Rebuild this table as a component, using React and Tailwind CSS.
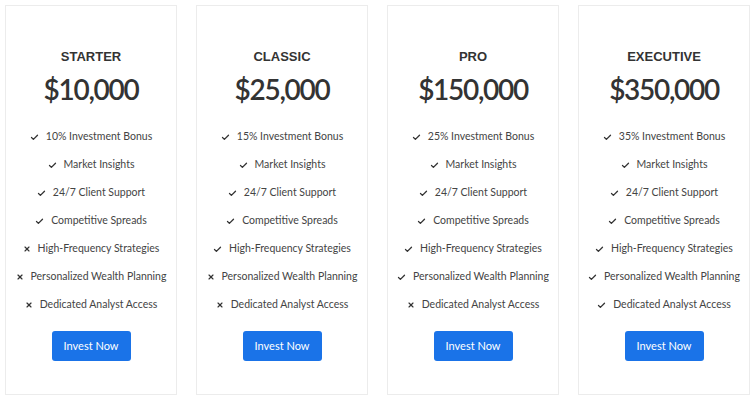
import { Check, X } from "lucide-react";

const features = [
  "Investment Bonus",
  "Market Insights",
  "24/7 Client Support",
  "Competitive Spreads",
  "High-Frequency Strategies",
  "Personalized Wealth Planning",
  "Dedicated Analyst Access",
];

const plans = [
  { name: "STARTER", price: "$10,000", bonus: "10%", included: 4 },
  { name: "CLASSIC", price: "$25,000", bonus: "15%", included: 5 },
  { name: "PRO", price: "$150,000", bonus: "25%", included: 6 },
  { name: "EXECUTIVE", price: "$350,000", bonus: "35%", included: 7 },
];

function PlanCard({ plan }) {
  return (
    <div className="flex flex-col items-center border border-[#ececec] bg-white pt-[41px]">
      <h3 className="text-[13px] font-bold leading-[20px] text-[#333]" style={{ fontFamily: '"Liberation Sans", Arial, sans-serif' }}>
        {plan.name}
      </h3>
      <div className="mt-[3px] text-[28px] font-semibold leading-[38px] tracking-[-1.3px] text-[#333]">{plan.price}</div>
      <ul className="mt-[15px] flex flex-col items-center">
        {features.map((f, i) => {
          const ok = i < plan.included;
          return (
            <li key={f} className="flex h-[28px] items-center gap-[7px] text-[10.5px] text-[#444]">
              {ok ? (
                <Check size={9} strokeWidth={3.5} className="text-[#333]" />
              ) : (
                <X size={8} strokeWidth={3.5} className="text-[#333]" />
              )}
              <span>{i === 0 ? `${plan.bonus} ${f}` : f}</span>
            </li>
          );
        })}
      </ul>
      <button className="mt-[12px] h-[30px] w-[79px] rounded-[3px] bg-[#1a73e8] text-[11px] text-white">
        Invest Now
      </button>
    </div>
  );
}

export default function App() {
  return (
    <div className="h-[400px] w-[755px] bg-white px-[5px] py-[5px]" style={{ fontFamily: 'Lato, "Open Sans", sans-serif' }}>
      <div className="grid h-full grid-cols-4 gap-[19px]">
        {plans.map((p) => (
          <PlanCard key={p.name} plan={p} />
        ))}
      </div>
    </div>
  );
}
